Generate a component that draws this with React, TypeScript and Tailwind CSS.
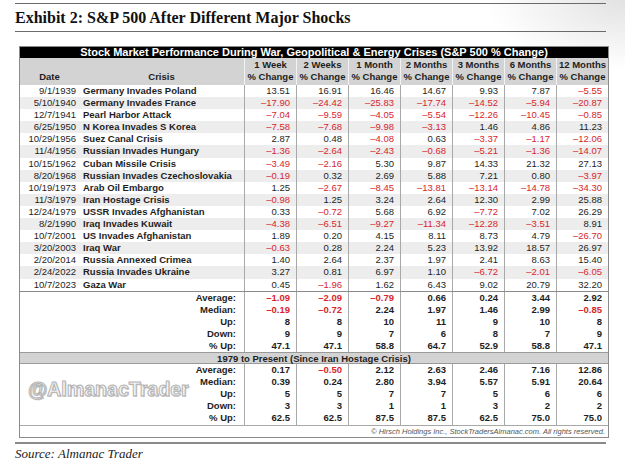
const cols = "grid grid-cols-[59px_165px_repeat(7,52px)]";

type Row = [string, string, string[]];

const rows: Row[] = [
  ["9/1/1939", "Germany Invades Poland", ["13.51", "16.91", "16.46", "14.67", "9.93", "7.87", "-5.55"]],
  ["5/10/1940", "Germany Invades France", ["-17.90", "-24.42", "-25.83", "-17.74", "-14.52", "-5.94", "-20.87"]],
  ["12/7/1941", "Pearl Harbor Attack", ["-7.04", "-9.59", "-4.05", "-5.54", "-12.26", "-10.45", "-0.85"]],
  ["6/25/1950", "N Korea Invades S Korea", ["-7.58", "-7.68", "-9.98", "-3.13", "1.46", "4.86", "11.23"]],
  ["10/29/1956", "Suez Canal Crisis", ["2.87", "0.48", "-4.08", "0.63", "-3.37", "-1.17", "-12.06"]],
  ["11/4/1956", "Russian Invades Hungary", ["-1.36", "-2.64", "-2.43", "-0.68", "-5.21", "-1.36", "-14.07"]],
  ["10/15/1962", "Cuban Missile Crisis", ["-3.49", "-2.16", "5.30", "9.87", "14.33", "21.32", "27.13"]],
  ["8/20/1968", "Russian Invades Czechoslovakia", ["-0.19", "0.32", "2.69", "5.88", "7.21", "0.80", "-3.97"]],
  ["10/19/1973", "Arab Oil Embargo", ["1.25", "-2.67", "-8.45", "-13.81", "-13.14", "-14.78", "-34.30"]],
  ["11/3/1979", "Iran Hostage Crisis", ["-0.98", "1.25", "3.24", "2.64", "12.30", "2.99", "25.88"]],
  ["12/24/1979", "USSR Invades Afghanistan", ["0.33", "-0.72", "5.68", "6.92", "-7.72", "7.02", "26.29"]],
  ["8/2/1990", "Iraq Invades Kuwait", ["-4.38", "-6.51", "-9.27", "-11.34", "-12.28", "-3.51", "8.91"]],
  ["10/7/2001", "US Invades Afghanistan", ["1.89", "0.20", "4.15", "8.11", "8.73", "4.79", "-26.70"]],
  ["3/20/2003", "Iraq War", ["-0.63", "0.28", "2.24", "5.23", "13.92", "18.57", "26.97"]],
  ["2/20/2014", "Russia Annexed Crimea", ["1.40", "2.64", "2.37", "1.97", "2.41", "8.63", "15.40"]],
  ["2/24/2022", "Russia Invades Ukraine", ["3.27", "0.81", "6.97", "1.10", "-6.72", "-2.01", "-6.05"]],
  ["10/7/2023", "Gaza War", ["0.45", "-1.96", "1.62", "6.43", "9.02", "20.79", "32.20"]],
];

const allYears: [string, string[]][] = [
  ["Average:", ["-1.09", "-2.09", "-0.79", "0.66", "0.24", "3.44", "2.92"]],
  ["Median:", ["-0.19", "-0.72", "2.24", "1.97", "1.46", "2.99", "-0.85"]],
  ["Up:", ["8", "8", "10", "11", "9", "10", "8"]],
  ["Down:", ["9", "9", "7", "6", "8", "7", "9"]],
  ["% Up:", ["47.1", "47.1", "58.8", "64.7", "52.9", "58.8", "47.1"]],
];

const since1979: [string, string[]][] = [
  ["Average:", ["0.17", "-0.50", "2.12", "2.63", "2.46", "7.16", "12.86"]],
  ["Median:", ["0.39", "0.24", "2.80", "3.94", "5.57", "5.91", "20.64"]],
  ["Up:", ["5", "5", "7", "7", "5", "6", "6"]],
  ["Down:", ["3", "3", "1", "1", "3", "2", "2"]],
  ["% Up:", ["62.5", "62.5", "87.5", "87.5", "62.5", "75.0", "75.0"]],
];

const heads = ["1 Week", "2 Weeks", "1 Month", "2 Months", "3 Months", "6 Months", "12 Months"];

const Num = ({ v }: { v: string }) => {
  const neg = v.startsWith("-");
  return (
    <div className={`border-l border-[#a8a8a8] text-right pr-[6px] ${neg ? "text-[#d8262b]" : ""}`}>
      {neg ? "\u2013" + v.slice(1) : v}
    </div>
  );
};

const Summary = ({ data }: { data: [string, string[]][] }) => (
  <div className="font-bold">
    {data.map(([label, vals]) => (
      <div key={label} className={`${cols} h-[12.1px] leading-[12.1px]`}>
        <div className="col-span-2 text-right pr-[8px]">{label}</div>
        {vals.map((v, i) => (
          <Num key={i} v={v} />
        ))}
      </div>
    ))}
  </div>
);

export default function App() {
  return (
    <div className="w-[625px] h-[468px] overflow-hidden bg-[radial-gradient(ellipse_140px_70px_at_100%_0%,#e2e2e2_0%,#ffffff_100%)] font-['Liberation_Sans',Arial,sans-serif] text-[#1e1e1e]">
      <div className="ml-[15px] w-[591px] pt-[3px]">
        <div className="h-px bg-[#6a6a6a]" />
        <h1 className="h-[27px] leading-[27px] font-['Liberation_Serif',serif] font-bold text-[16px] text-[#111]">
          Exhibit 2: S&amp;P 500 After Different Major Shocks
        </h1>
        <div className="h-px bg-[#6a6a6a]" />
      </div>

      <div className="ml-[19px] mt-[14px] w-[590px] border border-[#8c8c8c] bg-white text-[9.5px]">
        <div className="h-[11px] bg-black text-white font-bold text-[11px] leading-[11px] text-center whitespace-nowrap">
          Stock Market Performance During War, Geopolitical &amp; Energy Crises (S&amp;P 500 % Change)
        </div>

        <div className={`${cols} h-[27px] bg-[#d3d3d3] font-bold leading-[12px]`}>
          <div className="flex items-end justify-center pb-[2px]">Date</div>
          <div className="flex items-end justify-center pb-[2px]">Crisis</div>
          {heads.map((h) => (
            <div key={h} className="border-l border-[#f2f2f2] flex flex-col items-center justify-end pb-[2px]">
              <span>{h}</span>
              <span>% Change</span>
            </div>
          ))}
        </div>

        {rows.map(([date, crisis, vals], i) => (
          <div
            key={date + crisis}
            className={`${cols} h-[12.1px] leading-[12.1px] ${i % 2 === 1 ? "bg-[#ededed]" : "bg-white"}`}
          >
            <div className="text-right pr-[3px]">{date}</div>
            <div className="font-bold pl-[4px] whitespace-nowrap">{crisis}</div>
            {vals.map((v, j) => (
              <Num key={j} v={v} />
            ))}
          </div>
        ))}

        <div className="border-t border-[#8a8a8a]">
          <Summary data={allYears} />
        </div>

        <div className="h-[12px] leading-[11px] bg-[#d3d3d3] border-y border-[#9a9a9a] text-center font-bold">
          1979 to Present (Since Iran Hostage Crisis)
        </div>

        <div className="relative">
          <Summary data={since1979} />
          <div className="absolute left-[8px] top-[14px] text-[20px] leading-[22px] font-bold text-[#f6f6f6] [-webkit-text-stroke:1px_#b2b2b2] [text-shadow:1px_1px_0_#cfcfcf] scale-x-[0.98] origin-left whitespace-nowrap">
            @AlmanacTrader
          </div>
        </div>

        <div className="h-[12px] border-t border-[#a8a8a8] text-right italic text-[7.5px] leading-[12px] text-[#555] pr-[3px]">
          © Hirsch Holdings Inc., StockTradersAlmanac.com. All rights reserved.
        </div>
      </div>

      <div className="ml-[15px] mt-[4px] w-[591px] h-[2px] bg-[#8a8a8a]" />
      <div className="ml-[15px] mt-[2px] font-['Liberation_Serif',serif] italic text-[13px] leading-[16px] text-[#222]">
        Source: Almanac Trader
      </div>
    </div>
  );
}
